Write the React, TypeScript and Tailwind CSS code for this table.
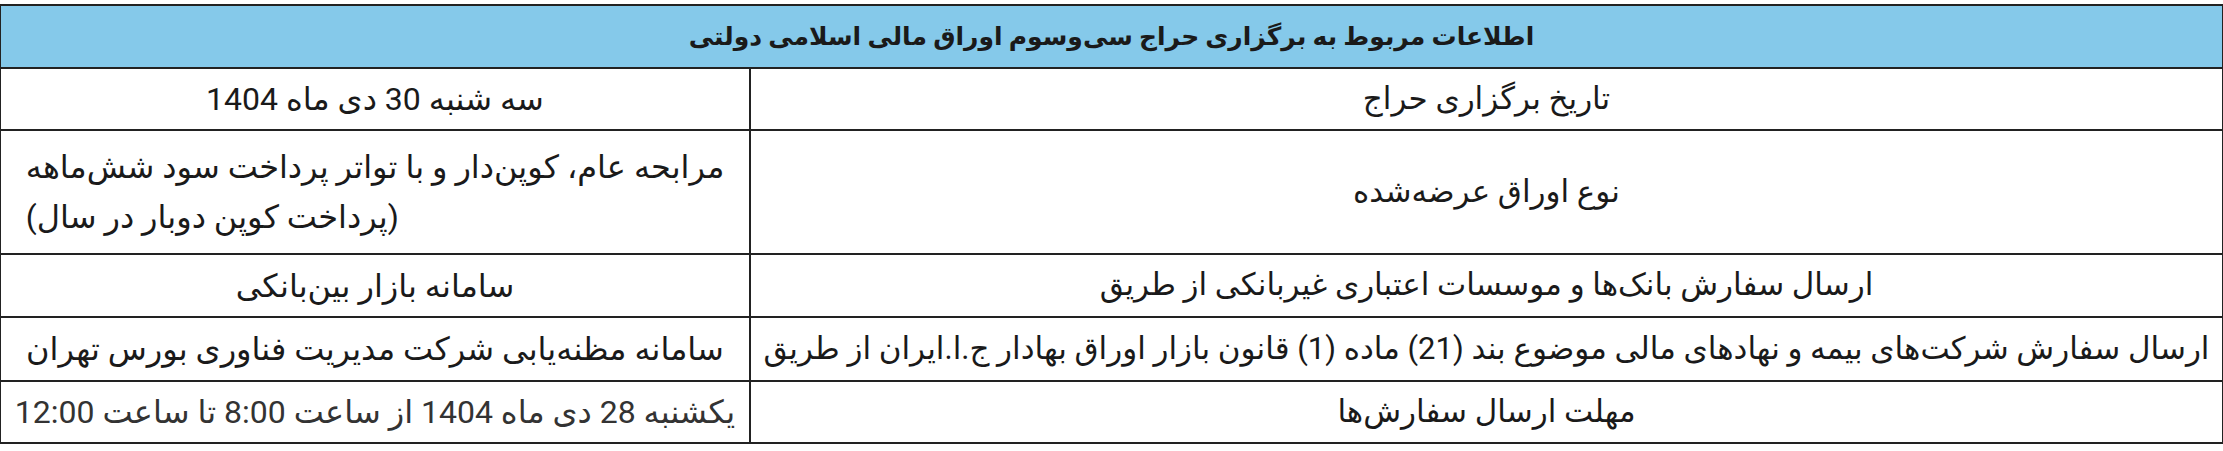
const rows: { label: string; value: React.ReactNode; h: string; align?: string; tone?: string }[] = [
  { label: "تاریخ برگزاری حراج", value: "سه شنبه 30 دی ماه 1404", h: "h-[62px]" },
  {
    label: "نوع اوراق عرضه‌شده",
    value: (
      <>
        مرابحه عام، کوپن‌دار و با تواتر پرداخت سود شش‌ماهه
        <br />
        (پرداخت کوپن دوبار در سال)
      </>
    ),
    h: "h-[124px]",
    align: "text-left",
  },
  {
    label: "ارسال سفارش بانک‌ها و موسسات اعتباری غیربانکی از طریق",
    value: "سامانه بازار بین‌بانکی",
    h: "h-[63px]",
  },
  {
    label: "ارسال سفارش شرکت‌های بیمه و نهادهای مالی موضوع بند (21) ماده (1) قانون بازار اوراق بهادار ج.ا.ایران از طریق",
    value: "سامانه مظنه‌یابی شرکت مدیریت فناوری بورس تهران",
    h: "h-[64px]",
  },
  {
    label: "مهلت ارسال سفارش‌ها",
    value: "یکشنبه 28 دی ماه 1404 از ساعت 8:00 تا ساعت 12:00",
    h: "h-[62px]",
    tone: "text-[#333]",
  },
];

export default function App() {
  return (
    <div
      dir="rtl"
      className="w-[2223px] h-[451px] bg-white pt-[4px] text-[#1a1a1a] overflow-hidden"
      style={{ fontFamily: 'Roboto, "DejaVu Sans", sans-serif' }}
    >
      <div className="border-t-2 border-x border-[#222]">
        <div className="h-[63px] border-b-2 border-[#222] bg-[#85c9ea] flex items-center justify-center text-[25px] font-bold">
          اطلاعات مربوط به برگزاری حراج سی‌وسوم اوراق مالی اسلامی دولتی
        </div>
        {rows.map((r, i) => (
          <div key={i} className={`grid grid-cols-[minmax(0,1fr)_748px] border-b-2 border-[#222] ${r.h}`}>
            <div className="min-w-0 border-l-2 border-[#222] flex items-center justify-center text-center text-[31px] whitespace-nowrap overflow-hidden">
              {r.label}
            </div>
            <div className={`min-w-0 flex items-center justify-center text-[32px] leading-[50px] whitespace-nowrap overflow-hidden ${r.tone ?? ""}`}>
              <span className={r.align ?? "text-center"}>{r.value}</span>
            </div>
          </div>
        ))}
      </div>
    </div>
  );
}
